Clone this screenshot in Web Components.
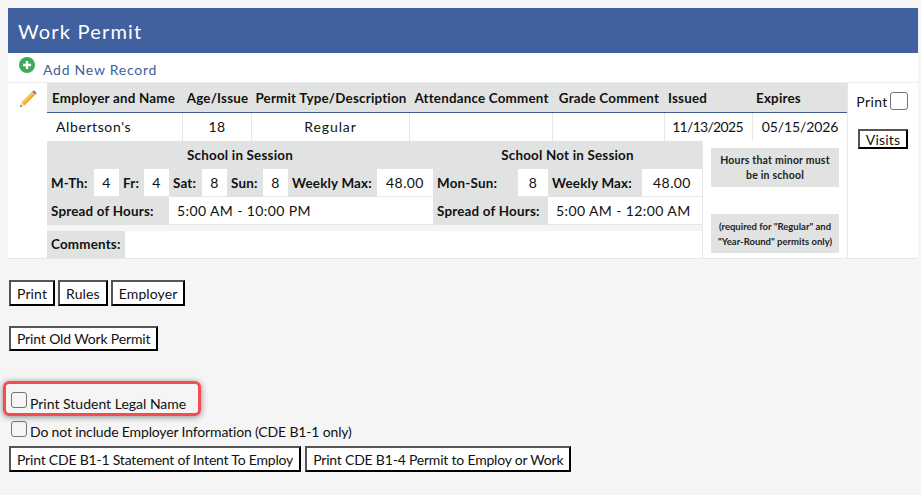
<!DOCTYPE html>
<html>
<head>
<meta charset="utf-8">
<title>Work Permit</title>
<style>
  html, body { margin:0; padding:0; }
  body { background:#f5f5f5; font-family:"Lato", "Noto Sans", sans-serif; font-size:14px; color:#111; height:495px; overflow:hidden; }
  .page { padding:8px 3px 0 8px; }
</style>
</head>
<body>
<div class="page">
  <wp-panel title="Work Permit">
    <wp-permit></wp-permit>
  </wp-panel>
  <wp-actions></wp-actions>
</div>

<script>
//basic outset button used all over the page
class WpButton extends HTMLElement {
  constructor(){
    super();
    this.attachShadow({mode:"open"}).innerHTML = `
    <style>
      :host { display:inline-block; }
      div {
        box-sizing:border-box; height:var(--h,26px); padding:0 6px;
        display:flex; align-items:center; justify-content:center;
        background:#fff; color:#111; font-size:14px;
        border:2px solid; border-color:#555 #000 #000 #555; white-space:nowrap;
      }
    </style>
    <div><slot></slot></div>`;
  }
}
customElements.define("wp-button", WpButton);

class WpCheck extends HTMLElement {
  constructor(){
    super();
    this.attachShadow({mode:"open"}).innerHTML = `
    <style>
      :host { display:inline-block; flex:none; width:var(--s,16px); height:var(--s,16px); box-sizing:border-box;
        background:var(--bg,transparent); border:1px solid #767676; border-radius:3px; }
    </style>`;
  }
}
customElements.define("wp-check", WpCheck);

//blue title + add record row + white body
class WpPanel extends HTMLElement {
  constructor(){
    super();
    this.attachShadow({mode:"open"}).innerHTML = `
    <style>
      :host { display:block; width:910px; background:#fff; }
      h1 { margin:0; height:45px; padding:0 10px; background:#41609f; color:#fff; display:flex; align-items:center;
        font-size:20px; font-weight:400; letter-spacing:1.2px; }
      .add { height:30px; box-sizing:border-box; display:flex; align-items:center; padding:0 11px; border-bottom:1px solid #eee; color:#41609f; font-size:14px; letter-spacing:.75px; }
      .add svg { margin:-5px 8px 0 0; }
      .add span { padding-top:4px; }
    </style>
    <h1></h1>
    <div class="add">
      <svg width="16" height="16" viewBox="0 0 16 16"><circle cx="8" cy="8" r="8" fill="#3fa95c"/><path d="M8 4v8M4 8h8" stroke="#fff" stroke-width="2.4"/></svg>
      <span>Add New Record</span>
    </div>
    <slot></slot>`;
    this.shadowRoot.querySelector("h1").textContent = this.getAttribute("title");
  }
}
customElements.define("wp-panel", WpPanel);

//the permit record itself
class WpPermit extends HTMLElement {
  constructor(){
    super();
    this.attachShadow({mode:"open"}).innerHTML = `
    <style>
      :host { display:grid; grid-template-columns:39px 800px 71px; height:175px; font-size:14px; letter-spacing:.2px; }
      .edit { padding:7px 0 0 11px; border-bottom:1px solid #e6e8e8; }
      .print { border-left:1px solid #e6e8e8; border-bottom:1px solid #e6e8e8; padding-top:9px; display:flex; flex-direction:column; align-items:center; }
      .print .p { display:flex; align-items:center; gap:2px; font-size:14px; letter-spacing:.4px; margin-left:-2px; }
      .print wp-button { margin-top:19px; --h:20px; }
      .print wp-check { --s:18px; --bg:#fff; }

      .cols { display:grid; grid-template-columns:136px 69px 158px 143px 112px 88px 94px; }
      .th { height:29px; background:#e1e3e2; font-weight:700; display:flex; align-items:center; padding-left:5px; border-bottom:1px solid #3f5a8f; white-space:nowrap; font-size:13.4px; }
      .th.c { justify-content:center; padding:0; }
      .th.d { padding-left:3px; }
      .td { height:28px; box-sizing:border-box; padding-bottom:2px; display:flex; align-items:center; justify-content:center; border-right:1px solid #e6e8e8; letter-spacing:.4px; }
      .td.l { justify-content:flex-start; padding-left:9px; letter-spacing:.6px; }
      .td:last-child { border-right:0; }

      .lower { display:grid; grid-template-columns:655px 145px; }
      .notes { border-left:1px solid #e6e8e8; border-bottom:1px solid #e6e8e8; box-sizing:border-box; padding:7px 8px 5px 8px; display:flex; flex-direction:column; justify-content:space-between; }
      .notes div { background:#e1e3e2; height:39px; display:flex; align-items:center; justify-content:center; text-align:center; font-size:10.5px; font-weight:700; line-height:15px; color:#222; }
      .notes div.sm { font-size:9.5px; letter-spacing:0; }

      .hours { display:grid; height:84px; background:#e1e3e2;
        grid-template-columns:47px 25px 25px 25px 33px 25px 36px 25px 89px 56px 85px 30px 94px 60px;
        grid-template-rows:28px 28px 28px; }
      .hours > * { display:flex; align-items:center; white-space:nowrap; }
      .lb { font-weight:700; font-size:13.4px; padding-left:4px; }
      .tt { grid-column:span 10; justify-content:center; font-weight:700; font-size:13.4px; }
      .tt.r { grid-column:span 4; }
      .v { background:#fff; justify-content:center; border-bottom:1px solid #e6e8e8; box-sizing:border-box; letter-spacing:.4px; }
      .v.t { justify-content:flex-start; padding-left:8px; }
      .s2 { grid-column:span 2; }
      .sp { background:#f5f5f5; height:6px; }
      .comments { display:flex; height:28px; box-sizing:border-box; border-bottom:1px solid #e6e8e8; }
      .comments span { width:78px; background:#e1e3e2; display:flex; align-items:center; padding:0 0 2px 4px; box-sizing:border-box; font-weight:700; font-size:13.4px; }
    </style>

    <div class="edit">
      <svg width="18" height="18" viewBox="0 0 18 18">
        <path d="M12.5 2.5l3 3L5.5 15.5l-3-3z" fill="#f5a623"/>
        <path d="M12.5 2.5l1.5 1.5L4 14l-1.500-1.500z" fill="#fbc95a"/>
        <path d="M12.500 2.500l1.700-1.700a1 1 0 0 1 1.400 0l1.600 1.600a1 1 0 0 1 0 1.400L15.500 5.500z" fill="#e2574c"/>
        <path d="M12.200 2.800l3 3 1-1-3-3z" fill="#c8c8c8"/>
        <path d="M2.500 12.500l3 3L1 17z" fill="#f2d7a8"/>
        <path d="M1.800 15l1.200 1.200L1 17z" fill="#333"/>
      </svg>
    </div>

    <div class="main">
      <div class="cols">
        <div class="th">Employer and Name</div>
        <div class="th c">Age/Issue</div>
        <div class="th c">Permit Type/Description</div>
        <div class="th c">Attendance Comment</div>
        <div class="th c">Grade Comment</div>
        <div class="th d">Issued</div>
        <div class="th d">Expires</div>
        <div class="td l">Albertson's</div>
        <div class="td">18</div>
        <div class="td" style="letter-spacing:.9px">Regular</div>
        <div class="td"></div>
        <div class="td"></div>
        <div class="td" style="letter-spacing:-.7px; padding-right:2px">11/13/2025</div>
        <div class="td" style="letter-spacing:-.1px">05/15/2026</div>
      </div>
      <div class="lower">
        <div>
          <div class="hours">
            <div class="tt">School in Session</div>
            <div class="tt r">School Not in Session</div>
            <div class="lb">M-Th:</div><div class="v">4</div>
            <div class="lb">Fr:</div><div class="v">4</div>
            <div class="lb">Sat:</div><div class="v">8</div>
            <div class="lb">Sun:</div><div class="v">8</div>
            <div class="lb">Weekly Max:</div><div class="v">48.00</div>
            <div class="lb">Mon-Sun:</div><div class="v">8</div>
            <div class="lb">Weekly Max:</div><div class="v">48.00</div>
            <div class="lb" style="grid-column:span 4">Spread of Hours:</div>
            <div class="v t" style="grid-column:span 6">5:00 AM - 10:00 PM</div>
            <div class="lb s2">Spread of Hours:</div>
            <div class="v t s2">5:00 AM - 12:00 AM</div>
          </div>
          <div class="sp"></div>
          <div class="comments"><span>Comments:</span></div>
        </div>
        <div class="notes">
          <div>Hours that minor must<br>be in school</div>
          <div class="sm">(required for "Regular" and<br>"Year-Round" permits only)</div>
        </div>
      </div>
    </div>

    <div class="print">
      <div class="p">Print <wp-check></wp-check></div>
      <wp-button style="letter-spacing:.2px">Visits</wp-button>
    </div>`;
  }
}
customElements.define("wp-permit", WpPermit);

//buttons and options under the panel
class WpActions extends HTMLElement {
  constructor(){
    super();
    this.attachShadow({mode:"open"}).innerHTML = `
    <style>
      :host { display:flex; flex-direction:column; align-items:flex-start; padding:23px 0 0 1px; margin-top:-1px; letter-spacing:-.15px; }
      .row { display:flex; gap:3px; }
      .opt { display:flex; align-items:flex-end; gap:3px; height:18px; margin-left:2px; font-size:14px; }
      .opt span { position:relative; top:3px; }
      .hl { position:relative; margin-top:39px; letter-spacing:0; }
      .hl span { top:4px; }
      .hl::after { content:""; position:absolute; left:-8px; top:-9px; width:192px; height:29px; border:3px solid #f44c50; border-radius:6px; box-shadow:0 1px 6px rgba(0,0,0,.45); }
    </style>
    <div class="row" style="letter-spacing:.12px"><wp-button>Print</wp-button><wp-button>Rules</wp-button><wp-button>Employer</wp-button></div>
    <div class="row" style="margin-top:20px; --h:25px"><wp-button>Print Old Work Permit</wp-button></div>
    <div class="opt hl"><wp-check></wp-check><span>Print Student Legal Name</span></div>
    <div class="opt" style="margin-top:11px"><wp-check></wp-check><span>Do not include Employer Information (CDE B1-1 only)</span></div>
    <div class="row" style="margin-top:9px; gap:4px; letter-spacing:-.2px"><wp-button>Print CDE B1-1 Statement of Intent To Employ</wp-button><wp-button>Print CDE B1-4 Permit to Employ or Work</wp-button></div>`;
  }
}
customElements.define("wp-actions", WpActions);
</script>
</body>
</html>
